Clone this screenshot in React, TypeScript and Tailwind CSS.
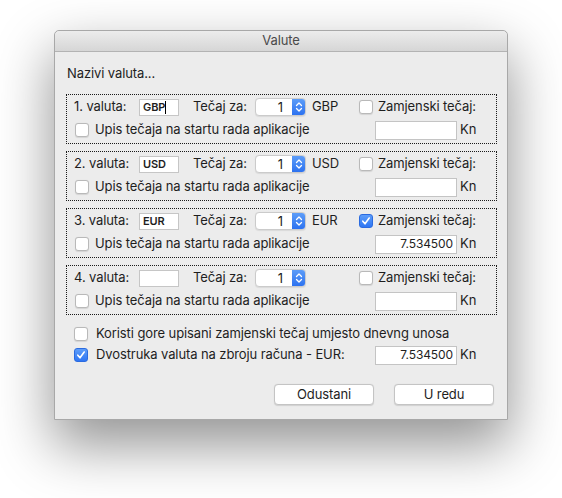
import React from "react";

function Check({ checked }: { checked?: boolean }) {
  if (checked) {
    return (
      <span className="w-[14px] h-[14px] rounded-[3px] bg-gradient-to-b from-[#5d9df9] to-[#2f76f3] border border-[#2b6be0] flex items-center justify-center shrink-0">
        <svg width="10" height="10" viewBox="0 0 10 10">
          <path d="M1.8 5.2 L4 7.8 L8.2 2" fill="none" stroke="white" strokeWidth="1.6" strokeLinecap="round" strokeLinejoin="round" />
        </svg>
      </span>
    );
  }
  return <span className="w-[14px] h-[14px] rounded-[3px] bg-white border border-[#b9b9b9] shadow-[0_0.5px_1px_rgba(0,0,0,0.1)] shrink-0" />;
}

function Stepper() {
  return (
    <div className="w-[51px] h-[18px] flex rounded-[4px] border border-[#cbcbcb] bg-white shadow-[0_0.5px_1px_rgba(0,0,0,0.08)] overflow-hidden">
      <div className="flex-1 flex items-center justify-end pr-[9px] text-[13px] leading-none">1</div>
      <div className="w-[13px] bg-gradient-to-b from-[#5c9cf8] to-[#2d72f0] flex items-center justify-center">
        <svg width="8" height="12" viewBox="0 0 8 12">
          <path d="M1.5 4.5 L4 2 L6.5 4.5" fill="none" stroke="white" strokeWidth="1.3" strokeLinecap="round" strokeLinejoin="round" />
          <path d="M1.5 7.5 L4 10 L6.5 7.5" fill="none" stroke="white" strokeWidth="1.3" strokeLinecap="round" strokeLinejoin="round" />
        </svg>
      </div>
    </div>
  );
}

function KnField({ value }: { value?: string }) {
  return (
    <div className="w-[82px] h-[19px] bg-white border border-[#c4c4c4] flex items-center justify-end pr-[3px] text-[12px] leading-none">
      {value}
    </div>
  );
}

function Group({ n, code, checked, value, cursor }: { n: number; code: string; checked?: boolean; value?: string; cursor?: boolean }) {
  return (
    <div className="ml-[11px] w-[431px] h-[50px] border border-dotted border-[#1a1a1a] flex flex-col pt-[2px]">
      <div className="h-[20px] flex items-center pl-[7px]">
        <span className="w-[65px]">{n}. valuta:</span>
        <div className="w-[40px] h-[17px] bg-white border border-[#c6c6c6] flex items-center pl-[3px] text-[11px] font-semibold leading-none">
          {code}
          {cursor && <span className="w-px h-[13px] bg-black" />}
        </div>
        <span className="ml-[14px] w-[62px]">Tečaj za:</span>
        <Stepper />
        <span className="ml-[6px] w-[47px]">{code}</span>
        <Check checked={checked} />
        <span className="ml-[5px]">Zamjenski tečaj:</span>
      </div>
      <div className="mt-[3px] h-[20px] flex items-center pl-[8px]">
        <Check />
        <span className="ml-[6px] w-[280px]">Upis tečaja na startu rada aplikacije</span>
        <KnField value={value} />
        <span className="ml-[3px]">Kn</span>
      </div>
    </div>
  );
}

export default function App() {
  return (
    <div className="w-[562px] h-[498px] bg-white overflow-hidden pt-[30px] pl-[54px] [font-family:Inter,sans-serif] text-[13px] tracking-[-0.1px] text-[#1e1e1e]">
      <div className="w-[454px] h-[390px] bg-[#ececec] rounded-t-[5px] border border-[#a8a8a8] shadow-[0_24px_55px_2px_rgba(0,0,0,0.42)] flex flex-col">
        <div className="h-[21px] rounded-t-[5px] bg-gradient-to-b from-[#ececec] to-[#d6d6d6] border-b border-[#b3b3b3] flex items-center justify-center text-[13px] text-[#4a4a4a]">
          Valute
        </div>
        <div className="pl-[12px] pt-[13px] h-[16px] box-content leading-[16px]">Nazivi valuta...</div>
        <div className="mt-[13px] flex flex-col gap-[7px]">
          <Group n={1} code="GBP" cursor />
          <Group n={2} code="USD" />
          <Group n={3} code="EUR" checked value="7.534500" />
          <Group n={4} code="" />
        </div>
        <div className="mt-[9px] h-[20px] flex items-center pl-[19px]">
          <Check />
          <span className="ml-[8px]">Koristi gore upisani zamjenski tečaj umjesto dnevng unosa</span>
        </div>
        <div className="mt-[1px] h-[20px] flex items-center pl-[19px]">
          <Check checked />
          <span className="ml-[8px] w-[279px]">Dvostruka valuta na zbroju računa - EUR:</span>
          <KnField value="7.534500" />
          <span className="ml-[3px]">Kn</span>
        </div>
        <div className="mt-[19px] flex justify-end gap-[20px] pr-[13px]">
          <button className="w-[100px] h-[21px] bg-white border border-[#c4c4c4] rounded-[4px] shadow-[0_0.5px_1px_rgba(0,0,0,0.12)] text-[13px] leading-none">Odustani</button>
          <button className="w-[100px] h-[21px] bg-white border border-[#c4c4c4] rounded-[4px] shadow-[0_0.5px_1px_rgba(0,0,0,0.12)] text-[13px] leading-none">U redu</button>
        </div>
      </div>
    </div>
  );
}
